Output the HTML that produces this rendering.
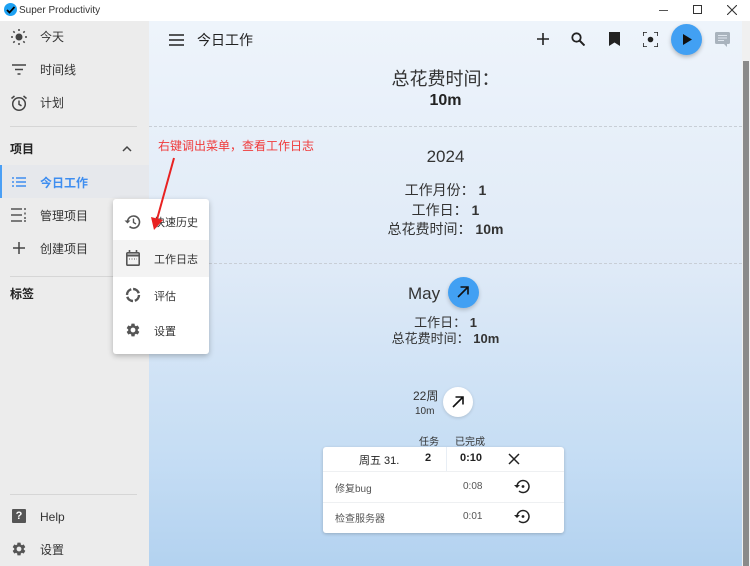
<!DOCTYPE html>
<html><head><meta charset="utf-8"><style>
*{margin:0;padding:0;box-sizing:border-box}
body{width:750px;height:566px;overflow:hidden;position:relative;font-family:"Liberation Sans","Noto Sans CJK SC",sans-serif;color:#222;background:#fff}
.a{position:absolute}
.t{white-space:nowrap}
#titlebar{left:0;top:0;width:750px;height:21px;background:#fff}
#side{left:0;top:21px;width:149px;height:545px;background:#ececec}
#main{left:149px;top:21px;width:593px;height:545px;background:linear-gradient(#eef4fb 0%,#dfeaf7 45%,#c5ddf4 80%,#b3d2f0 100%)}
#scroll{left:742px;top:21px;width:8px;height:545px;background:#f0f0f0}
.si{font-size:12px;color:#333}
.dash{border-top:1px dashed #c8ced6;height:0}
.c{text-align:center;width:593px;left:149px}
svg{display:block}
</style></head><body>
<div class="a" id="titlebar">
 <div class="a" style="left:4px;top:3px;width:13px;height:13px;border-radius:50%;background:#1da1f2"></div>
 <svg class="a" style="left:5px;top:4px" width="11" height="11" viewBox="0 0 11 11"><path d="M2 6l2.5 2.5L9.5 3" stroke="#000" stroke-width="1.8" fill="none"/></svg>
 <div class="a t" style="left:19px;top:5px;font-size:10px;color:#333">Super Productivity</div>
 <div class="a" style="left:659px;top:10px;width:9px;height:1px;background:#555"></div>
 <div class="a" style="left:693px;top:5px;width:9px;height:9px;border:1px solid #333"></div>
 <svg class="a" style="left:727px;top:5px" width="10" height="10"><path d="M0 0L10 10M10 0L0 10" stroke="#333" stroke-width="1.1"/></svg>
</div>
<div class="a" id="side">
 <svg class="a" style="left:11px;top:8px" width="16" height="16" viewBox="0 0 16 16"><circle cx="8" cy="8" r="3.5" fill="#444"/><g stroke="#444" stroke-width="1.5"><path d="M8 0v2M8 14v2M0 8h2M14 8h2M2.3 2.3l1.4 1.4M12.3 12.3l1.4 1.4M2.3 13.7l1.4-1.4M12.3 3.7l1.4-1.4"/></g></svg>
 <div class="a si t" style="left:40px;top:7px">今天</div>
 <svg class="a" style="left:12px;top:43px" width="14" height="11"><path d="M0 1h14M3 5.5h8M5.5 10h3" stroke="#444" stroke-width="1.5"/></svg>
 <div class="a si t" style="left:40px;top:40px">时间线</div>
 <svg class="a" style="left:10px;top:73px" width="18" height="18" viewBox="0 0 18 18"><circle cx="9" cy="10" r="6.3" stroke="#444" stroke-width="1.5" fill="none"/><path d="M9 6.5v3.8l2.5 1.5M1.5 4.5L4.5 2M16.5 4.5L13.5 2" stroke="#444" stroke-width="1.5" fill="none"/></svg>
 <div class="a si t" style="left:40px;top:73px">计划</div>
 <div class="a" style="left:10px;top:105px;width:127px;height:1px;background:#d6d6d6"></div>
 <div class="a t" style="left:10px;top:119px;font-size:12px;font-weight:bold;color:#222">项目</div>
 <svg class="a" style="left:122px;top:124px" width="10" height="7"><path d="M1 6l4-4 4 4" stroke="#444" stroke-width="1.5" fill="none"/></svg>
 <div class="a" style="left:0;top:144px;width:149px;height:33px;background:#e6e8ec"></div>
 <div class="a" style="left:0;top:144px;width:2px;height:33px;background:#4a9ff5"></div>
 <svg class="a" style="left:12px;top:156px" width="14" height="10"><path d="M0 1h2M4 1h10M0 5h2M4 5h10M0 9h2M4 9h10" stroke="#3f8ef0" stroke-width="1.6"/></svg>
 <div class="a t" style="left:40px;top:153px;font-size:12px;font-weight:bold;color:#3f8ef0">今日工作</div>
 <svg class="a" style="left:11px;top:187px" width="16" height="14"><path d="M0 1h11M0 7h11M0 13h11M14 0v2M14 4.5v2M14 9v2M14 12v2" stroke="#555" stroke-width="1.5"/></svg>
 <div class="a si t" style="left:40px;top:186px">管理项目</div>
 <svg class="a" style="left:13px;top:221px" width="12" height="12"><path d="M6 0v12M0 6h12" stroke="#444" stroke-width="1.5"/></svg>
 <div class="a si t" style="left:40px;top:219px">创建项目</div>
 <div class="a" style="left:10px;top:255px;width:127px;height:1px;background:#d6d6d6"></div>
 <div class="a t" style="left:10px;top:264px;font-size:12px;font-weight:bold;color:#222">标签</div>
 <div class="a" style="left:10px;top:473px;width:127px;height:1px;background:#d6d6d6"></div>
 <div class="a" style="left:12px;top:488px;width:14px;height:14px;background:#555;border-radius:1px;color:#fff;font-size:11px;font-weight:bold;text-align:center;line-height:14px">?</div>
 <div class="a si t" style="left:40px;top:489px">Help</div>
 <svg class="a" style="left:11px;top:520px" width="16" height="16" viewBox="0 0 24 24"><path fill="#555" d="M19.14 12.94c.04-.3.06-.61.06-.94 0-.32-.02-.64-.07-.94l2.03-1.58a.49.49 0 00.12-.61l-1.92-3.32a.49.49 0 00-.59-.22l-2.39.96c-.5-.38-1.03-.7-1.62-.94l-.36-2.54a.48.48 0 00-.48-.41h-3.84c-.24 0-.43.17-.47.41l-.36 2.54c-.59.24-1.130.57-1.62.94l-2.39-.96a.48.48 0 00-.59.22L2.74 8.87c-.12.21-.08.47.12.61l2.03 1.58c-.05.3-.09.63-.09.94s.02.64.07.94l-2.03 1.58a.49.49 0 00-.12.61l1.92 3.32c.12.22.37.29.59.22l2.39-.96c.5.38 1.03.7 1.62.94l.36 2.54c.05.24.24.41.48.41h3.84c.24 0 .44-.17.47-.41l.36-2.54c.59-.24 1.13-.56 1.62-.94l2.39.96c.22.08.47 0 .59-.22l1.92-3.32c.12-.22.07-.47-.12-.61l-2.01-1.58zM12 15.6A3.6 3.6 0 1112 8.4a3.6 3.6 0 010 7.2z"/></svg>
 <div class="a si t" style="left:40px;top:520px">设置</div>
</div>
<div class="a" id="main"></div>
<div class="a" id="scroll"><div class="a" style="left:1px;top:40px;width:6px;height:505px;background:#8a8a8a"></div></div>
<!-- header -->
<svg class="a" style="left:169px;top:34px" width="15" height="12"><path d="M0 1h15M0 6h15M0 11h15" stroke="#222" stroke-width="1.6"/></svg>
<div class="a t" style="left:197px;top:30px;font-size:14px;color:#222">今日工作</div>
<svg class="a" style="left:537px;top:33px" width="12" height="12"><path d="M6 0v12M0 6h12" stroke="#222" stroke-width="1.6"/></svg>
<svg class="a" style="left:571px;top:32px" width="14" height="14"><circle cx="5.5" cy="5.5" r="4.2" stroke="#222" stroke-width="1.8" fill="none"/><path d="M8.5 8.5l5 5" stroke="#222" stroke-width="2"/></svg>
<svg class="a" style="left:609px;top:32px" width="11" height="14"><path d="M0 0h11v14L5.5 10.5 0 14z" fill="#222"/></svg>
<svg class="a" style="left:643px;top:32px" width="15" height="15"><path d="M0 4V0h4M11 0h4v4M15 11v4h-4M4 15H0v-4" stroke="#222" stroke-width="1.6" fill="none"/><circle cx="7.5" cy="7.5" r="2.8" fill="#222"/></svg>
<div class="a" style="left:671px;top:24px;width:31px;height:31px;border-radius:50%;background:#42a0f3;box-shadow:0 2px 4px rgba(0,0,0,.25)"></div>
<svg class="a" style="left:683px;top:34px" width="9" height="11"><path d="M0 0l9 5.5L0 11z" fill="#111"/></svg>
<svg class="a" style="left:715px;top:32px" width="15" height="15"><path d="M0 1.5A1.5 1.5 0 011.5 0h12A1.5 1.5 0 0115 1.5v9a1.5 1.5 0 01-1.5 1.5H12v3l-3-3H1.5A1.5 1.5 0 010 10.5z" fill="#a9b3bd"/><path d="M3 3.5h9M3 6h9M3 8.5h6" stroke="#dfe6ee" stroke-width="1"/></svg>
<!-- content -->
<div class="a c t" style="top:65px;font-size:18px;color:#333">总花费时间：</div>
<div class="a c t" style="top:92px;font-size:16px;font-weight:bold;color:#222">10m</div>
<div class="a dash" style="left:149px;top:126px;width:593px"></div>
<div class="a c t" style="top:147px;font-size:17px;color:#333">2024</div>
<div class="a c t" style="top:180px;font-size:14px;color:#333">工作月份： <b>1</b></div>
<div class="a c t" style="top:200px;font-size:14px;color:#333">工作日： <b>1</b></div>
<div class="a c t" style="top:219px;font-size:14px;color:#333">总花费时间： <b>10m</b></div>
<div class="a dash" style="left:149px;top:263px;width:593px"></div>
<div class="a t" style="left:408px;top:284px;font-size:17px;color:#333">May</div>
<div class="a" style="left:448px;top:277px;width:31px;height:31px;border-radius:50%;background:#42a0f3;box-shadow:0 2px 4px rgba(0,0,0,.2)"></div>
<svg class="a" style="left:457px;top:286px" width="12" height="12"><path d="M1 11L11 1M3.5 1H11v7.5" stroke="#111" stroke-width="1.6" fill="none"/></svg>
<div class="a c t" style="top:312px;font-size:13px;color:#333">工作日： <b>1</b></div>
<div class="a c t" style="top:328px;font-size:13px;color:#333">总花费时间： <b>10m</b></div>
<div class="a t" style="left:413px;top:387px;font-size:12px;color:#333">22周</div>
<div class="a t" style="left:415px;top:406px;font-size:10px;color:#333">10m</div>
<div class="a" style="left:443px;top:387px;width:30px;height:30px;border-radius:50%;background:#fff;box-shadow:0 1px 3px rgba(0,0,0,.15)"></div>
<svg class="a" style="left:452px;top:396px" width="12" height="12"><path d="M1 11L11 1M3.5 1H11v7.5" stroke="#111" stroke-width="1.6" fill="none"/></svg>
<div class="a t" style="left:419px;top:433px;font-size:10px;color:#333">任务</div>
<div class="a t" style="left:455px;top:433px;font-size:10px;color:#333">已完成</div>
<div class="a" style="left:323px;top:447px;width:241px;height:86px;background:#fff;border-radius:3px;box-shadow:0 1px 3px rgba(0,0,0,.2)"></div>
<div class="a" style="left:446px;top:447px;width:1px;height:24px;background:#e8eef5"></div>
<div class="a" style="left:323px;top:471px;width:241px;height:1px;background:#eef0f2"></div>
<div class="a" style="left:323px;top:502px;width:241px;height:1px;background:#eef0f2"></div>
<div class="a t" style="left:359px;top:452px;font-size:11px;color:#222">周五 31.</div>
<div class="a t" style="left:425px;top:452px;font-size:11px;font-weight:bold;color:#222">2</div>
<div class="a t" style="left:460px;top:452px;font-size:11px;font-weight:bold;color:#222">0:10</div>
<svg class="a" style="left:508px;top:453px" width="12" height="12"><path d="M1 1l10 10M11 1L1 11" stroke="#222" stroke-width="1.5"/></svg>
<div class="a t" style="left:335px;top:480px;font-size:10px;color:#555">修复bug</div>
<div class="a t" style="left:463px;top:481px;font-size:10px;color:#555">0:08</div>
<div class="a t" style="left:335px;top:510px;font-size:10px;color:#555">检查服务器</div>
<div class="a t" style="left:463px;top:511px;font-size:10px;color:#555">0:01</div>
<svg class="a" style="left:513px;top:479px" width="17" height="15" viewBox="0 0 17 15"><path d="M4 7.5A6 6 0 1 1 6 12" stroke="#222" stroke-width="1.5" fill="none"/><path d="M1 6l3 3 3-3" fill="#222"/><circle cx="10" cy="7.5" r="1.4" fill="#222"/></svg>
<svg class="a" style="left:513px;top:509px" width="17" height="15" viewBox="0 0 17 15"><path d="M4 7.5A6 6 0 1 1 6 12" stroke="#222" stroke-width="1.5" fill="none"/><path d="M1 6l3 3 3-3" fill="#222"/><circle cx="10" cy="7.5" r="1.4" fill="#222"/></svg>
<!-- context menu -->
<div class="a" style="left:113px;top:199px;width:96px;height:155px;background:#fff;border-radius:3px;box-shadow:0 2px 6px rgba(0,0,0,.25)"></div>
<div class="a" style="left:113px;top:240px;width:96px;height:37px;background:#f3f3f3"></div>
<svg class="a" style="left:124px;top:214px" width="17" height="16" viewBox="0 0 17 16"><path d="M3.5 8A6 6 0 1 1 5.5 12.5" stroke="#555" stroke-width="1.6" fill="none"/><path d="M0.5 6.5l3 3 3-3" fill="#555"/><path d="M9.5 4.5v4l2.5 1.5" stroke="#555" stroke-width="1.4" fill="none"/></svg>
<div class="a t" style="left:154px;top:214px;font-size:11px;color:#333">快速历史</div>
<svg class="a" style="left:126px;top:250px" width="14" height="16"><rect x="0.8" y="2.8" width="12.4" height="12.4" rx="1" stroke="#555" stroke-width="1.6" fill="none"/><path d="M0.8 5.5h12.4" stroke="#555" stroke-width="2"/><path d="M3.5 0v3M10.5 0v3" stroke="#555" stroke-width="1.6"/><path d="M3 9h8" stroke="#555" stroke-width="1" stroke-dasharray="1 1.5"/></svg>
<div class="a t" style="left:154px;top:251px;font-size:11px;color:#333">工作日志</div>
<svg class="a" style="left:125px;top:287px" width="16" height="16" viewBox="0 0 16 16"><circle cx="8" cy="8" r="6" stroke="#555" stroke-width="2.4" fill="none" stroke-dasharray="7.5 1.9"/></svg>
<div class="a t" style="left:154px;top:288px;font-size:11px;color:#333">评估</div>
<svg class="a" style="left:125px;top:322px" width="16" height="16" viewBox="0 0 24 24"><path fill="#555" d="M19.14 12.94c.04-.3.06-.61.06-.94 0-.32-.02-.64-.07-.94l2.03-1.58a.49.49 0 00.12-.61l-1.92-3.32a.49.49 0 00-.59-.22l-2.39.96c-.5-.38-1.03-.7-1.62-.94l-.36-2.54a.48.48 0 00-.48-.41h-3.84c-.24 0-.43.17-.47.41l-.36 2.54c-.59.24-1.13.57-1.62.94l-2.39-.96a.48.48 0 00-.59.22L2.74 8.87c-.12.21-.08.47.12.61l2.03 1.58c-.05.3-.09.63-.09.94s.02.64.07.94l-2.03 1.58a.49.49 0 00-.12.61l1.92 3.32c.12.22.37.29.59.22l2.39-.96c.5.38 1.03.7 1.62.94l.36 2.54c.05.24.24.41.48.41h3.84c.24 0 .44-.17.47-.41l.36-2.54c.59-.24 1.13-.56 1.62-.94l2.39.96c.22.08.47 0 .59-.22l1.92-3.32c.12-.22.07-.47-.12-.61l-2.01-1.58zM12 15.6A3.6 3.6 0 1112 8.4a3.6 3.6 0 010 7.2z"/></svg>
<div class="a t" style="left:154px;top:323px;font-size:11px;color:#333">设置</div>
<!-- annotation -->
<div class="a t" style="left:158px;top:137px;font-size:12px;color:#f03a3a">右键调出菜单，查看工作日志</div>
<svg class="a" style="left:148px;top:155px" width="30" height="82"><path d="M26 3L8 68" stroke="#e82222" stroke-width="2"/><path d="M3 62l3 13 9-10z" fill="#e82222"/></svg>
</body></html>
